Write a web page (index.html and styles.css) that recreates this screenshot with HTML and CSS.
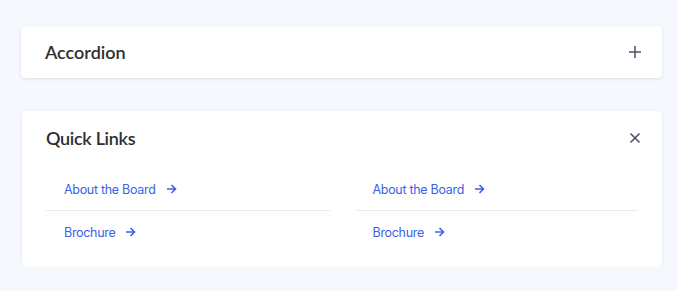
FILE: index.html
```html
<!DOCTYPE html>
<html lang="en">
<head>
  <meta charset="UTF-8">
  <meta name="viewport" content="width=device-width, initial-scale=1.0">
  <title>Accordion</title>
  <link rel="stylesheet" href="styles.css">
</head>
<body>
  <div class="page">
    <div class="card accordion">
      <div class="card-head">
        <h3>Accordion</h3>
        <button class="icon-btn" aria-label="Expand">
          <svg width="14" height="14" viewBox="0 0 14 14"><path d="M7 1v12M1 7h12" stroke="#4a5468" stroke-width="1.5" fill="none"/></svg>
        </button>
      </div>
    </div>

    <div class="card links-card">
      <div class="card-head">
        <h3>Quick Links</h3>
        <button class="icon-btn" aria-label="Close">
          <svg width="12" height="12" viewBox="0 0 12 12"><path d="M1.5 1.5l9 9M10.5 1.5l-9 9" stroke="#4a5468" stroke-width="1.6" fill="none"/></svg>
        </button>
      </div>
      <div class="links">
        <ul class="link-col">
          <li><a href="#">About the Board <span class="arrow"><svg width="11" height="10" viewBox="0 0 11 10"><path d="M1 5h8.5M5.5 1l4 4-4 4" stroke="#3c62e6" stroke-width="1.6" fill="none"/></svg></span></a></li>
          <li><a href="#">Brochure <span class="arrow"><svg width="11" height="10" viewBox="0 0 11 10"><path d="M1 5h8.5M5.5 1l4 4-4 4" stroke="#3c62e6" stroke-width="1.6" fill="none"/></svg></span></a></li>
        </ul>
        <ul class="link-col">
          <li><a href="#">About the Board <span class="arrow"><svg width="11" height="10" viewBox="0 0 11 10"><path d="M1 5h8.5M5.5 1l4 4-4 4" stroke="#3c62e6" stroke-width="1.6" fill="none"/></svg></span></a></li>
          <li><a href="#">Brochure <span class="arrow"><svg width="11" height="10" viewBox="0 0 11 10"><path d="M1 5h8.5M5.5 1l4 4-4 4" stroke="#3c62e6" stroke-width="1.6" fill="none"/></svg></span></a></li>
        </ul>
      </div>
    </div>
  </div>
</body>
</html>
```

FILE: styles.css
```css
body {
  margin: 0;
  background: #f5f8fc;
  font-family: Lato, "Noto Sans", sans-serif;
  color: #2b2b2b;
}
.page {
  padding: 26px 16px 0 21px;
  display: flex;
  flex-direction: column;
  gap: 33px;
}
.card {
  background: #fff;
  border-radius: 4px;
  box-shadow: 0 1px 3px rgba(30, 40, 60, 0.12);
}
.card-head {
  display: flex;
  align-items: center;
  justify-content: space-between;
}
.card-head h3 {
  margin: 0;
  font-size: 18px;
  font-weight: 600;
  line-height: 24px;
  color: #2e2e2e;
}
.accordion .card-head {
  height: 52px;
  padding: 0 20px 0 24px;
}
.links-card {
  margin-left: 1px;
  padding: 15px 24px 14px 24px;
}
.links-card h3 {
  letter-spacing: -0.3px;
}
.icon-btn {
  border: 0;
  background: none;
  padding: 0;
  display: flex;
  cursor: pointer;
}
.links-card .icon-btn {
  margin-right: -3px;
}
.links {
  display: grid;
  grid-template-columns: 1fr 1fr;
  gap: 25px;
  margin-top: 18px;
}
.link-col {
  list-style: none;
  margin: 0;
  padding: 0;
}
.link-col li {
  height: 42px;
  display: flex;
  align-items: center;
  padding-left: 18px;
}
.link-col li + li {
  border-top: 1px solid #e9edf3;
}
.link-col a {
  font-family: Inter, "Noto Sans", sans-serif;
  font-size: 12.5px;
  color: #3c62e6;
  text-decoration: none;
  display: flex;
  align-items: center;
  letter-spacing: -0.3px;
}
.arrow {
  display: flex;
  margin-left: 10px;
}
```
